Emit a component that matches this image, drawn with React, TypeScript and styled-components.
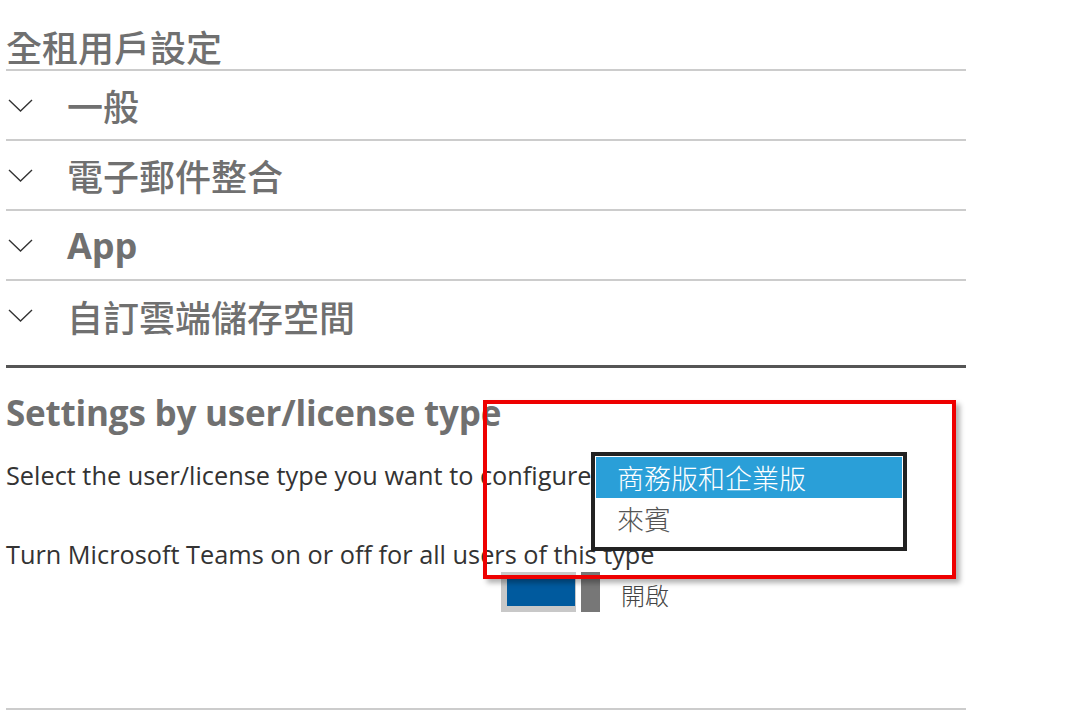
import styled, { createGlobalStyle } from 'styled-components';

const GlobalStyle = createGlobalStyle`
  html, body {
    margin: 0;
    padding: 0;
    background: #fff;
  }
  body {
    font-family: "Open Sans", "Noto Sans CJK TC", sans-serif;
  }
`;

const Page = styled.div`
  position: relative;
  width: 960px;
  padding: 0 6px;
  height: 720px;
  overflow: hidden;
`;

const PageTitle = styled.h1`
  margin: 0;
  padding-top: 25px;
  height: 44px;
  line-height: 42px;
  font-size: 36px;
  font-weight: 500;
  color: #707070;
  font-family: "Noto Sans CJK TC", sans-serif;
  border-bottom: 2px solid #cccccc;
`;

const Section = styled.div<{ $last?: boolean }>`
  display: flex;
  align-items: center;
  height: ${p => (p.$last ? 87 : 70)}px;
  padding-bottom: ${p => (p.$last ? 15 : 0)}px;
  box-sizing: border-box;
  border-bottom: ${p => (p.$last ? '3px solid #555555' : '2px solid #cccccc')};
`;

const Chevron = styled.svg`
  width: 25px;
  height: 13px;
  margin-left: 2px;
  margin-right: 34px;
  flex: none;
`;

const SectionLabel = styled.span<{ $latin?: boolean }>`
  font-family: ${p => (p.$latin ? '"Open Sans", sans-serif' : '"Noto Sans CJK TC", sans-serif')};
  font-size: 36px;
  font-weight: ${p => (p.$latin ? 700 : 500)};
  color: #707070;
`;

const SubHeading = styled.h2`
  margin: 0;
  padding-top: 24px;
  line-height: 42px;
  font-size: 35px;
  font-weight: 700;
  color: #707070;
  font-family: "Open Sans", sans-serif;
  letter-spacing: -0.2px;
`;

const Text = styled.p<{ $top: number }>`
  margin: ${p => p.$top}px 0 0;
  font-size: 25.3px;
  line-height: 30px;
  color: #333333;
  font-family: "Open Sans", sans-serif;
  white-space: nowrap;
`;

const ToggleRow = styled.div`
  display: flex;
  align-items: center;
  margin-left: 495px;
  margin-top: 3px;
  height: 40px;
`;

const ToggleTrack = styled.div`
  width: 75px;
  height: 40px;
  box-sizing: border-box;
  background: #c8c8c8;
  padding: 5px 1px 6px 6px;
`;

const ToggleFill = styled.div`
  width: 100%;
  height: 100%;
  background: #005a9e;
`;

const ToggleThumb = styled.div`
  width: 19px;
  height: 40px;
  margin-left: 5px;
  background: #777777;
`;

const ToggleLabel = styled.span`
  margin-left: 21px;
  margin-top: 4px;
  font-size: 24px;
  color: #444444;
  font-family: "Noto Sans CJK TC", sans-serif;
  font-weight: 300;
`;

const BottomRule = styled.div`
  position: absolute;
  left: 6px;
  top: 708px;
  width: 960px;
  height: 2px;
  background: #cccccc;
`;

const Highlight = styled.div`
  position: absolute;
  left: 483px;
  top: 400px;
  width: 473px;
  height: 179px;
  box-sizing: border-box;
  border: 4px solid #ee0000;
  box-shadow: 4px 4px 5px rgba(0, 0, 0, 0.3);
`;

const Dropdown = styled.div`
  position: absolute;
  left: 591px;
  top: 452px;
  width: 316px;
  height: 99px;
  box-sizing: border-box;
  border: 4px solid #222222;
  background: #fff;
  padding: 1px;
`;

const Option = styled.div<{ $selected?: boolean }>`
  height: 41px;
  padding-left: 21px;
  line-height: 41px;
  font-size: 27px;
  font-weight: 300;
  font-family: "Noto Sans CJK TC", sans-serif;
  background: ${p => (p.$selected ? '#2a9fd8' : 'transparent')};
  color: ${p => (p.$selected ? '#ffffff' : '#555555')};
`;

const sections = ['一般', '電子郵件整合', 'App', '自訂雲端儲存空間'];

export default function App() {
  return (
    <>
      <GlobalStyle />
      <Page>
        <PageTitle>全租用戶設定</PageTitle>
        {sections.map((s, i) => (
          <Section key={s} $last={i === sections.length - 1}>
            <Chevron viewBox="0 0 25 13">
              <path d="M1 1 L12.5 12 L24 1" fill="none" stroke="#333" strokeWidth="1.4" />
            </Chevron>
            <SectionLabel $latin={s === 'App'}>{s}</SectionLabel>
          </Section>
        ))}
        <SubHeading>Settings by user/license type</SubHeading>
        <Text $top={26}>Select the user/license type you want to configure</Text>
        <Text $top={49}>Turn Microsoft Teams on or off for all users of this type</Text>
        <ToggleRow>
          <ToggleTrack>
            <ToggleFill />
          </ToggleTrack>
          <ToggleThumb />
          <ToggleLabel>開啟</ToggleLabel>
        </ToggleRow>
        <BottomRule />
        <Highlight />
        <Dropdown>
          <Option $selected>商務版和企業版</Option>
          <Option>來賓</Option>
        </Dropdown>
      </Page>
    </>
  );
}
